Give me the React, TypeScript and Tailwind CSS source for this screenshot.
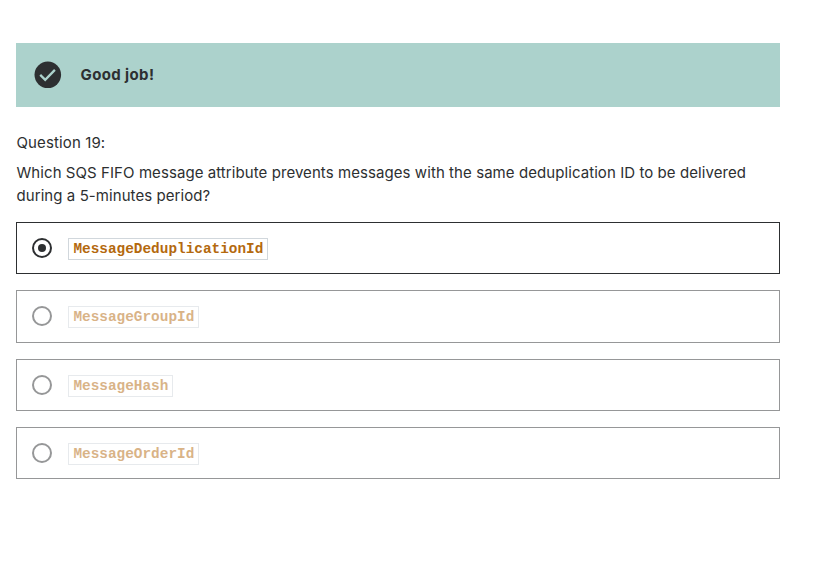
const answers = [
  { label: 'MessageDeduplicationId', selected: true },
  { label: 'MessageGroupId', selected: false },
  { label: 'MessageHash', selected: false },
  { label: 'MessageOrderId', selected: false },
];

function Answer({ label, selected }: { label: string; selected: boolean }) {
  return (
    <li className={`flex h-[52.3px] items-center border pl-[15px] ${selected ? 'border-[#2d2f31]' : 'border-[#969798]'}`}>
      <svg width="20" height="20" viewBox="0 0 20 20" className={`shrink-0 ${selected ? 'text-[#2d2f31]' : 'text-[#969798]'}`}>
        <circle cx="10" cy="10" r="9" fill="none" stroke="currentColor" strokeWidth="2" />
        {selected && <circle cx="10" cy="10" r="4" fill="currentColor" />}
      </svg>
      <code
        className={`mt-[2px] ml-4 flex h-[22px] items-center border border-[#d1d7dc] pr-[3.6px] pl-[4.4px] font-['Liberation_Mono',monospace] text-[14.4px] leading-5 font-bold text-[#b4690e] ${selected ? '' : 'opacity-50'}`}
      >
        {label}
      </code>
    </li>
  );
}

export default function App() {
  return (
    <main className="min-h-[576px] bg-white pt-[43px] pr-[37px] pl-4 font-[Inter,sans-serif] text-[#2d2f31]">
      <div className="flex h-16 items-center bg-[#acd2cc] pl-[18px]">
        <svg width="28" height="28" viewBox="0 0 28 28" className="shrink-0">
          <circle cx="13.8" cy="13.8" r="13.3" fill="#2d2f31" />
          <path d="M6.2 13.9 11.2 18.8 20.9 8.9" fill="none" stroke="#acd2cc" strokeWidth="2.3" />
        </svg>
        <p className="ml-[18.5px] text-[15px] leading-6 font-bold tracking-[0.38px]">Good job!</p>
      </div>
      <section className="pt-[25px] pl-[0.5px] text-[15px] tracking-[0.072px]">
        <p className="h-[22px] leading-[22px] tracking-[0.12px]">Question 19:</p>
        <div className="mt-[7px] h-[45px] leading-[23px] whitespace-nowrap">
          <p>Which SQS FIFO message attribute prevents messages with the same deduplication ID to be delivered</p>
          <p>during a 5-minutes period?</p>
        </div>
      </section>
      <ul className="mt-4 flex flex-col gap-4">
        {answers.map((answer) => (
          <Answer key={answer.label} {...answer} />
        ))}
      </ul>
    </main>
  );
}
